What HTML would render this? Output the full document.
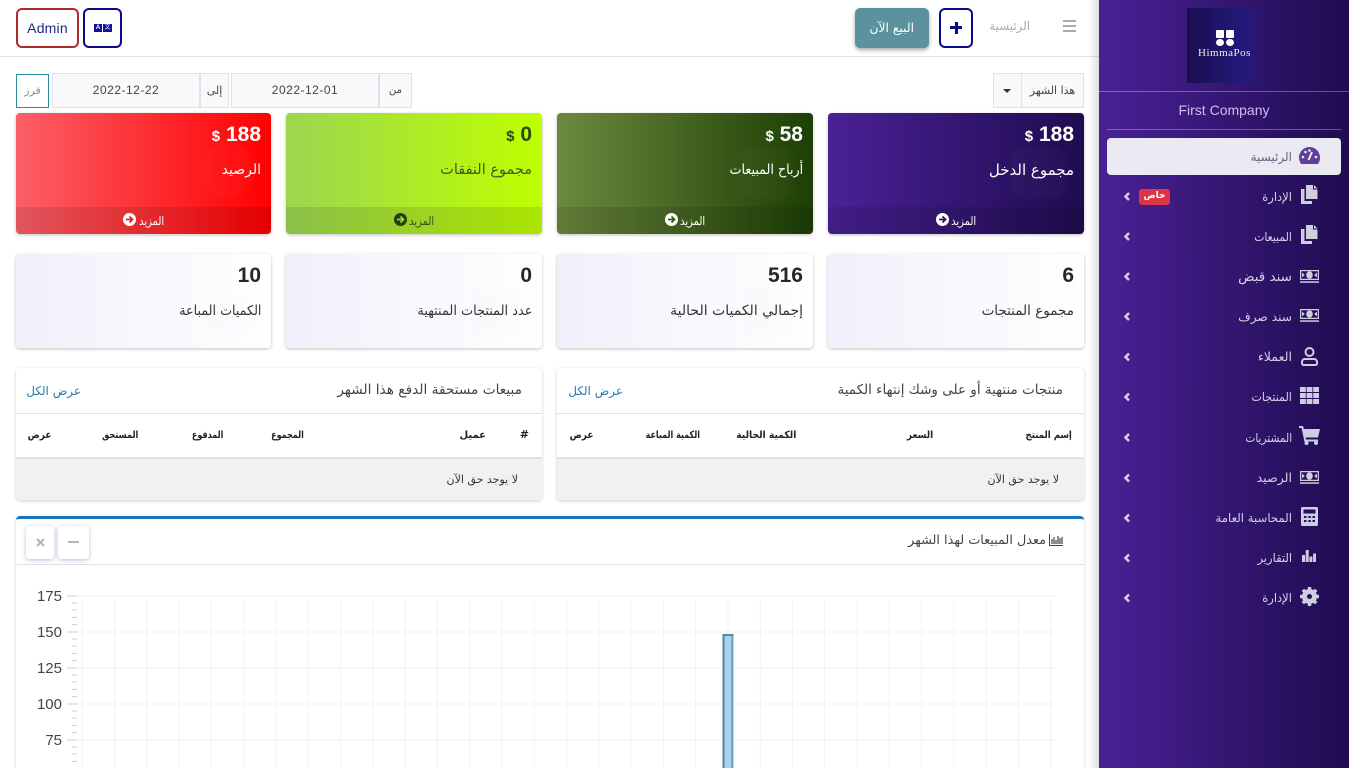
<!DOCTYPE html>
<html lang="ar"><head><meta charset="utf-8"><title>HimmaPos</title>
<style>
*{box-sizing:border-box}
html{margin:0;padding:0;width:1349px;height:768px;overflow:hidden}
body{margin:0;padding:0;width:1349px;height:768px;overflow:hidden;position:relative;background:#fff;font-family:"Liberation Sans","DejaVu Sans",sans-serif;color:#333}
.a{position:absolute}
.t{position:absolute;white-space:nowrap;line-height:20px;height:20px;font-family:"DejaVu Sans","Liberation Sans",sans-serif;transform-origin:right center}
.n{position:absolute;white-space:nowrap;line-height:24px;height:24px;font-family:"Liberation Sans",sans-serif;font-weight:bold;font-size:21px}
.n small{font-size:15px}
.card{position:absolute;border-radius:4px;box-shadow:0 1px 3px rgba(0,0,0,.25);overflow:hidden}
.foot{position:absolute;left:0;right:0;bottom:0;height:27px;background:rgba(0,0,0,.1)}
.blob{position:absolute;filter:blur(2px)}
.box{position:absolute;background:#fff;border-radius:4px;box-shadow:0 1px 3px rgba(0,0,0,.2);overflow:hidden}
.inp{position:absolute;background:#f8f9fa;border:1px solid #dfe2e6;height:35px;top:73px;line-height:33px;text-align:center;font-size:12px;color:#444;letter-spacing:.5px}
.th{font-size:10px;font-weight:bold;color:#222}
.more{font-size:12px;transform:scaleX(.83);top:211px}
.side{font-size:12px;color:#d5d0e6}
svg{position:absolute;overflow:visible}
</style></head>
<body>
<!-- main top bar -->
<div class="a" style="left:0;top:56px;width:1099px;height:1px;background:#dee2e6"></div>
<div class="a" style="left:16px;top:8px;width:63px;height:40px;border:2px solid #b02a2a;border-radius:6px;text-align:center;line-height:36px;font-size:14px;letter-spacing:.2px;color:#24248a">Admin</div>
<div class="a" style="left:83px;top:8px;width:39px;height:40px;border:2px solid #0a0a8c;border-radius:6px"></div>
<div class="a" style="left:94px;top:24px;width:8px;height:8px;background:#1010a0;color:#fff;font-size:6px;line-height:8px;text-align:center;font-weight:bold">A</div>
<div class="a" style="left:103px;top:24px;width:9px;height:8px;background:#1010a0;color:#fff;font-size:6px;line-height:8px;text-align:center">文</div>
<div class="a" style="left:855px;top:8px;width:74px;height:40px;background:#5b929e;border-radius:5px;box-shadow:0 2px 4px rgba(0,0,0,.35)"></div>
<span class="t" dir="rtl" style="right:435px;top:18px;color:#fff;font-size:12.300px">البيع الآن</span>
<div class="a" style="left:939px;top:8px;width:34px;height:40px;border:2px solid #0a0a8c;border-radius:6px"></div>
<div class="a" style="left:950px;top:26px;width:12px;height:3px;background:#0a0a8c"></div>
<div class="a" style="left:954.500px;top:22px;width:3px;height:12px;background:#0a0a8c"></div>
<span class="t" dir="rtl" style="right:319px;top:16px;color:#aaa;font-size:11.800px">الرئيسية</span>
<div class="a" style="left:1063px;top:20px;width:13px;height:2px;background:#a9a9b4"></div>
<div class="a" style="left:1063px;top:25px;width:13px;height:2px;background:#a9a9b4"></div>
<div class="a" style="left:1063px;top:30px;width:13px;height:2px;background:#a9a9b4"></div>

<!-- filter row -->
<div class="a" style="left:16px;top:74px;width:33px;height:34px;border:1px solid #2a8f9e;text-align:center;line-height:32px;font-size:11px;color:#6a9aa5;font-family:'DejaVu Sans',sans-serif">فرز</div>
<div class="inp" style="left:52px;width:148px">2022-12-22</div>
<div class="inp" style="left:200px;width:29px;font-family:'DejaVu Sans',sans-serif;font-size:11px">إلى</div>
<div class="inp" style="left:231px;width:148px">2022-12-01</div>
<div class="inp" style="left:379px;width:33px;font-family:'DejaVu Sans',sans-serif;font-size:10px">من</div>
<div class="inp" style="left:993px;width:29px"></div>
<div class="a" style="left:1003px;top:89px;border-left:4px solid transparent;border-right:4px solid transparent;border-top:4px solid #333"></div>
<div class="inp" style="left:1021px;width:63px;font-family:'DejaVu Sans',sans-serif;font-size:11px;letter-spacing:0">هذا الشهر</div>

<!-- colored cards -->
<div class="card" style="left:828px;top:113px;width:256px;height:121px;background:linear-gradient(90deg,#4a2196,#1f0c50)">
  <div class="blob" style="left:182px;top:34px;width:56px;height:52px;border-radius:12px;background:rgba(255,255,255,.02)"></div>
  <div class="foot"></div>
</div>
<div class="card" style="left:557px;top:113px;width:256px;height:121px;background:linear-gradient(90deg,#6c8a3e,#1e3f05)">
  <div class="blob" style="left:185px;top:34px;width:50px;height:52px;border-radius:8px;background:rgba(255,255,255,.02)"></div>
  <div class="foot"></div>
</div>
<div class="card" style="left:286px;top:113px;width:256px;height:121px;background:linear-gradient(90deg,#9bd651,#bfff00)">
  <div class="foot"></div>
</div>
<div class="card" style="left:16px;top:113px;width:255px;height:121px;background:linear-gradient(90deg,#fb6069,#ff0000)">
  <div class="blob" style="left:183px;top:29px;width:56px;height:56px;border-radius:50%;background:rgba(255,255,255,.025)"></div>
  <div class="foot"></div>
</div>

<span class="n" style="right:275px;top:123px;color:#fff"><small>$</small> 188</span>
<span class="n" style="right:546px;top:123px;color:#fff"><small>$</small> 58</span>
<span class="n" style="right:817px;top:123px;color:#2b4a10"><small>$</small> 0</span>
<span class="n" style="right:1088px;top:123px;color:#fff"><small>$</small> 188</span>
<span class="t" dir="rtl" style="right:275px;top:160px;color:#fff;font-size:15px">مجموع الدخل</span>
<span class="t" dir="rtl" style="right:546px;top:160px;color:#fff;font-size:14px;transform:scaleX(.907)">أرباح المبيعات</span>
<span class="t" dir="rtl" style="right:817px;top:160px;color:#3d5a20;font-size:14.500px">مجموع النفقات</span>
<span class="t" dir="rtl" style="right:1088px;top:160px;color:#fff;font-size:14px">الرصيد</span>

<!-- card footers -->
<span class="t more" dir="rtl" style="right:373px;color:#fff">المزيد</span>
<div class="a" style="left:936px;top:213px;width:13px;height:13px;border-radius:50%;background:#fff"></div>
<svg style="left:936px;top:213px" width="13" height="13" viewBox="0 0 13 13"><path d="M3 6.500h6.500M6.500 3.500l3 3-3 3" fill="none" stroke="#2b1463" stroke-width="1.800"/></svg>
<span class="t more" dir="rtl" style="right:644px;color:#fff">المزيد</span>
<div class="a" style="left:665px;top:213px;width:13px;height:13px;border-radius:50%;background:#fff"></div>
<svg style="left:665px;top:213px" width="13" height="13" viewBox="0 0 13 13"><path d="M3 6.500h6.500M6.500 3.500l3 3-3 3" fill="none" stroke="#3a5a1c" stroke-width="1.800"/></svg>
<span class="t more" dir="rtl" style="right:915px;color:#33501a">المزيد</span>
<div class="a" style="left:394px;top:213px;width:13px;height:13px;border-radius:50%;background:#23400f"></div>
<svg style="left:394px;top:213px" width="13" height="13" viewBox="0 0 13 13"><path d="M3 6.500h6.500M6.500 3.500l3 3-3 3" fill="none" stroke="#a9d52a" stroke-width="1.800"/></svg>
<span class="t more" dir="rtl" style="right:1185px;color:#fff">المزيد</span>
<div class="a" style="left:123px;top:213px;width:13px;height:13px;border-radius:50%;background:#fff"></div>
<svg style="left:123px;top:213px" width="13" height="13" viewBox="0 0 13 13"><path d="M3 6.500h6.500M6.500 3.500l3 3-3 3" fill="none" stroke="#d8282e" stroke-width="1.800"/></svg>

<!-- light cards -->
<div class="card" style="left:828px;top:254px;width:256px;height:94px;background:linear-gradient(90deg,#f0f0fb,#fff)"></div>
<div class="card" style="left:557px;top:254px;width:256px;height:94px;background:linear-gradient(90deg,#f0f0fb,#fff)"><div class="blob" style="left:185px;top:32px;width:48px;height:50px;background:rgba(120,120,170,.012)"></div></div>
<div class="card" style="left:286px;top:254px;width:256px;height:94px;background:linear-gradient(90deg,#f0f0fb,#fff)"><div class="blob" style="left:186px;top:36px;width:48px;height:44px;background:rgba(120,120,170,.012)"></div></div>
<div class="card" style="left:16px;top:254px;width:255px;height:94px;background:linear-gradient(90deg,#f0f0fb,#fff)"><div class="blob" style="left:190px;top:42px;width:50px;height:44px;border-radius:50%;background:rgba(120,120,170,.012)"></div></div>
<span class="n" style="right:275px;top:264px;color:#23272b">6</span>
<span class="n" style="right:546px;top:264px;color:#23272b">516</span>
<span class="n" style="right:817px;top:264px;color:#23272b">0</span>
<span class="n" style="right:1088px;top:264px;color:#23272b">10</span>
<span class="t" dir="rtl" style="right:275px;top:301px;color:#333;font-size:13.500px">مجموع المنتجات</span>
<span class="t" dir="rtl" style="right:546px;top:301px;color:#333;font-size:14px">إجمالي الكميات الحالية</span>
<span class="t" dir="rtl" style="right:817px;top:301px;color:#333;font-size:13.500px;transform:scaleX(.955)">عدد المنتجات المنتهية</span>
<span class="t" dir="rtl" style="right:1088px;top:301px;color:#333;font-size:13.500px;transform:scaleX(.94)">الكميات المباعة</span>

<!-- tables -->
<div class="box" style="left:16px;top:368px;width:526px;height:132px">
  <div class="a" style="left:0;right:0;top:45px;height:1px;background:#dee2e6"></div>
  <div class="a" style="left:0;right:0;top:89px;bottom:0;background:#f1f1f1;border-top:2px solid #dee2e6"></div>
</div>
<div class="box" style="left:557px;top:368px;width:527px;height:132px">
  <div class="a" style="left:0;right:0;top:45px;height:1px;background:#dee2e6"></div>
  <div class="a" style="left:0;right:0;top:89px;bottom:0;background:#f1f1f1;border-top:2px solid #dee2e6"></div>
</div>
<span class="t" dir="rtl" style="right:827px;top:380px;font-size:13.700px;color:#444">مبيعات مستحقة الدفع هذا الشهر</span>
<span class="t" dir="rtl" style="right:1268px;top:381px;font-size:12px;color:#2a7ab0">عرض الكل</span>
<span class="t" dir="rtl" style="right:286px;top:380px;font-size:13.500px;color:#444">منتجات منتهية أو على وشك إنتهاء الكمية</span>
<span class="t" dir="rtl" style="right:726px;top:381px;font-size:12px;color:#2a7ab0">عرض الكل</span>

<span class="t th" style="right:820px;top:425px;font-size:11px">#</span>
<span class="t th" dir="rtl" style="right:863px;top:426px">عميل</span>
<span class="t th" dir="rtl" style="right:1045px;top:426px;transform:scaleX(.8)">المجموع</span>
<span class="t th" dir="rtl" style="right:1126px;top:426px;transform:scaleX(.8)">المدفوع</span>
<span class="t th" dir="rtl" style="right:1211px;top:426px;transform:scaleX(.82)">المستحق</span>
<span class="t th" dir="rtl" style="right:1297px;top:426px;transform:scaleX(.9)">عرض</span>
<span class="t th" dir="rtl" style="right:277px;top:426px;transform:scaleX(.86)">إسم المنتج</span>
<span class="t th" dir="rtl" style="right:416px;top:426px;transform:scaleX(.9)">السعر</span>
<span class="t th" dir="rtl" style="right:553px;top:426px;transform:scaleX(.92)">الكمية الحالية</span>
<span class="t th" dir="rtl" style="right:649px;top:426px;transform:scaleX(.8)">الكمية المباعة</span>
<span class="t th" dir="rtl" style="right:755px;top:426px;transform:scaleX(.9)">عرض</span>
<span class="t" dir="rtl" style="right:831px;top:470px;font-size:11px;color:#333">لا يوجد حق الآن</span>
<span class="t" dir="rtl" style="right:290px;top:470px;font-size:11px;color:#333">لا يوجد حق الآن</span>

<!-- chart card -->
<div class="box" style="left:16px;top:516px;width:1068px;height:262px;border-top:3px solid #1a75bc">
  <div class="a" style="left:0;right:0;top:45px;height:1px;background:#dee2e6"></div>
</div>
<div class="a" style="left:26px;top:526px;width:28px;height:33px;background:#fff;border-radius:4px;box-shadow:0 1px 4px rgba(60,60,140,.35)"></div>
<div class="a" style="left:58px;top:526px;width:31px;height:33px;background:#fff;border-radius:4px;box-shadow:0 1px 4px rgba(60,60,140,.35)"></div>
<svg style="left:36px;top:538px" width="9" height="9" viewBox="0 0 9 9"><path d="M1 1l7 7M8 1l-7 7" stroke="#b5b5b5" stroke-width="2"/></svg>
<div class="a" style="left:68px;top:541px;width:11px;height:2px;background:#b5b5b5"></div>
<span class="t" dir="rtl" style="right:303px;top:531px;font-size:12.800px;color:#444">معدل المبيعات لهذا الشهر</span>
<svg style="left:1049px;top:534px" width="14" height="12" viewBox="0 0 14 12"><path d="M.5 0v11.500H14" fill="none" stroke="#444" stroke-width="1"/><path d="M3 5v5M5 3v7M7 6v4M9 2v8M11 4v6M13 3v7" stroke="#444" stroke-width="1.200"/></svg>

<svg style="left:0;top:0" width="1099" height="768" viewBox="0 0 1099 768">
  <path d="M77 596H1055M77 632H1055M77 668H1055M77 704H1055M77 740H1055" stroke="#f0f0f0" stroke-width="1" fill="none"/>
  <path d="M82.300 599V768M114.600 599V768M146.900 599V768M179.100 599V768M211.400 599V768M243.700 599V768M276 599V768M308.300 599V768M340.500 599V768M372.800 599V768M405.100 599V768M437.400 599V768M469.700 599V768M501.900 599V768M534.200 599V768M566.500 599V768M598.800 599V768M631.100 599V768M663.300 599V768M695.600 599V768M727.900 599V768M760.200 599V768M792.500 599V768M824.700 599V768M857 599V768M889.300 599V768M921.600 599V768M953.900 599V768M986.100 599V768M1018.400 599V768M1050.700 599V768" stroke="#f2f2f2" stroke-width="1" fill="none"/>
  <path d="M67 596H77M67 632H77M67 668H77M67 704H77M67 740H77" stroke="#cccccc" stroke-width="1"/>
  <path d="M72 603H77M72 610H77M72 617.500H77M72 624.500H77M72 639H77M72 646H77M72 653.500H77M72 660.500H77M72 675H77M72 682H77M72 689.500H77M72 696.500H77M72 711H77M72 718H77M72 725.500H77M72 732.500H77M72 747H77M72 754H77M72 761.500H77" stroke="#cfcfcf" stroke-width="1"/>
  <rect x="723" y="634" width="10" height="134" fill="#abd2ea"/>
  <path d="M723.500 768V635H732.500V768" fill="none" stroke="#4f86a6" stroke-width="2"/>
  <path d="M733 636V768" stroke="#79b9dc" stroke-width="1"/>
  <g font-family="Liberation Sans, sans-serif" font-size="15" fill="#444" text-anchor="end">
    <text x="62" y="601">175</text><text x="62" y="637">150</text><text x="62" y="673">125</text><text x="62" y="709">100</text><text x="62" y="745">75</text>
  </g>
</svg>

<!-- sidebar -->
<div class="a" style="left:1089px;top:0;width:10px;height:768px;background:linear-gradient(90deg,rgba(0,0,0,0),rgba(0,0,0,.13))"></div>
<div class="a" style="left:1099px;top:0;width:250px;height:768px;background:linear-gradient(90deg,#4a2196,#1f0c50)"></div>
<div class="a" style="left:1187px;top:8px;width:75px;height:75px;background:linear-gradient(90deg,#1b0e50,#23197a 75%,rgba(40,30,130,.2))"></div>
<div class="a" style="left:1216px;top:30px;width:8px;height:8px;background:#fff;border-radius:1px"></div>
<div class="a" style="left:1226px;top:30px;width:8px;height:8px;background:#fff;border-radius:1px"></div>
<div class="a" style="left:1216px;top:39px;width:8px;height:7px;background:#fff;border-radius:50%"></div>
<div class="a" style="left:1226px;top:39px;width:8px;height:7px;background:#fff;border-radius:50%"></div>
<div class="a" style="left:1187px;top:47px;width:75px;text-align:center;font-family:'Liberation Serif',serif;font-size:11px;color:#eee;letter-spacing:.5px;line-height:13px">HimmaPos</div>
<div class="a" style="left:1099px;top:91px;width:250px;height:1px;background:rgba(255,255,255,.3)"></div>
<div class="a" style="left:1099px;top:101px;width:250px;text-align:center;font-size:14px;line-height:18px;color:#cdbcf0">First Company</div>
<div class="a" style="left:1107px;top:129px;width:234px;height:1px;background:rgba(255,255,255,.3)"></div>
<div class="a" style="left:1107px;top:138px;width:234px;height:37px;background:#ebe9f2;border-radius:4px"></div>

<svg width="0" height="0" style="position:absolute"><defs>
  <symbol id="copy" viewBox="0 0 17 19"><path d="M5 0h7v4.500h4.500V14H5z" fill="#cfcde0"/><path d="M13 0l3.500 3.500H13z" fill="#cfcde0"/><path d="M0 4h3.500v12H11v3H0z" fill="#cfcde0"/></symbol>
  <symbol id="money" viewBox="0 0 19 13"><path fill-rule="evenodd" d="M0 0h19v10H0zM1.200 1.200v7.600h16.600V1.200z" fill="#cfcde0"/><rect x="0" y="11.300" width="19" height="1.500" fill="#cfcde0"/><ellipse cx="9.500" cy="5" rx="3.300" ry="3.800" fill="#cfcde0"/><path d="M2 2.500v5l2.800-2.500zM17 2.500v5l-2.800-2.500z" fill="#cfcde0"/></symbol>
</defs></svg>

<!-- active icon -->
<svg style="left:1299px;top:147px" width="21" height="17" viewBox="0 0 21 17"><path d="M10.500 0A10.500 10.500 0 0 0 0 10.500c0 2.400.8 4.600 2.100 6.500h16.800a10.400 10.400 0 0 0 2.100-6.500A10.500 10.500 0 0 0 10.500 0z" fill="#5f3f98"/><path d="M9.500 13L13 5" stroke="#ebe9f2" stroke-width="2"/><circle cx="4" cy="10" r="1.300" fill="#ebe9f2"/><circle cx="6.500" cy="5" r="1.300" fill="#ebe9f2"/><circle cx="10.500" cy="3.500" r="1.300" fill="#ebe9f2"/><circle cx="17" cy="10" r="1.300" fill="#ebe9f2"/></svg>
<span class="t" dir="rtl" style="right:57px;top:147px;font-size:12px;color:#6a6580">الرئيسية</span>

<!-- icons -->
<svg style="left:1301px;top:185px" width="17" height="19"><use href="#copy"/></svg>
<svg style="left:1301px;top:225px" width="17" height="19"><use href="#copy"/></svg>
<svg style="left:1300px;top:270px" width="19" height="13"><use href="#money"/></svg>
<svg style="left:1300px;top:309px" width="19" height="13"><use href="#money"/></svg>
<svg style="left:1301px;top:347px" width="17" height="19" viewBox="0 0 17 19"><circle cx="8.500" cy="5" r="4" fill="none" stroke="#cfcde0" stroke-width="2"/><path d="M4 12h9a3 3 0 0 1 3 3v1.500a1.500 1.500 0 0 1-1.500 1.500h-12A1.500 1.500 0 0 1 1 16.500V15a3 3 0 0 1 3-3z" fill="none" stroke="#cfcde0" stroke-width="2"/></svg>
<svg style="left:1300px;top:387px" width="19" height="17" viewBox="0 0 19 17"><path d="M0 0h5.800v5H0zM6.600 0h5.800v5H6.600zM13.200 0H19v5h-5.800zM0 6h5.800v5H0zM6.600 6h5.800v5H6.600zM13.200 6H19v5h-5.800zM0 12h5.800v5H0zM6.600 12h5.800v5H6.600zM13.200 12H19v5h-5.800z" fill="#cfcde0"/></svg>
<svg style="left:1299px;top:426px" width="21" height="19" viewBox="0 0 21 19"><path d="M0 0h4l.8 3H21l-2 8.500H6.600l.4 2H19v2H5.400L2.600 2H0z" fill="#cfcde0"/><circle cx="7.500" cy="17" r="2" fill="#cfcde0"/><circle cx="17" cy="17" r="2" fill="#cfcde0"/></svg>
<svg style="left:1300px;top:471px" width="19" height="13"><use href="#money"/></svg>
<svg style="left:1301px;top:507px" width="17" height="19" viewBox="0 0 17 19"><path fill-rule="evenodd" d="M1.500 0h14A1.500 1.500 0 0 1 17 1.500v16a1.500 1.500 0 0 1-1.500 1.500h-14A1.500 1.500 0 0 1 0 17.500v-16A1.500 1.500 0 0 1 1.500 0zM2.500 2.500v4h12v-4zM3 9v2h2.500V9zM7.300 9v2h2.500V9zM11.500 9v2H14V9zM3 13v2h2.500v-2zM7.300 13v2h2.500v-2zM11.500 13v2H14v-2z" fill="#cfcde0"/></svg>
<svg style="left:1302px;top:550px" width="14" height="12" viewBox="0 0 14 12"><path d="M0 5h3v7H0zM3.700 0h3v12h-3zM7.400 6.500h3V12h-3zM11.100 3.500H14V12h-2.900z" fill="#cfcde0"/></svg>
<svg style="left:1300px;top:587px" width="19" height="19" viewBox="0 0 19 19"><circle cx="9.500" cy="9.500" r="5" fill="none" stroke="#cfcde0" stroke-width="5"/><path d="M9.500 0v4M9.500 15v4M0 9.500h4M15 9.500h4M2.800 2.800l2.800 2.800M13.400 13.400l2.800 2.800M2.800 16.200l2.800-2.800M13.400 5.600l2.800-2.800" stroke="#cfcde0" stroke-width="3.500"/></svg>

<!-- labels -->
<span class="t side" dir="rtl" style="right:57px;top:187px;transform:scaleX(.96)">الإدارة</span>
<span class="t side" dir="rtl" style="right:57px;top:227px;transform:scaleX(.9)">المبيعات</span>
<span class="t side" dir="rtl" style="right:57px;top:267px;font-size:13.500px">سند قبض</span>
<span class="t side" dir="rtl" style="right:57px;top:307px;font-size:12.200px">سند صرف</span>
<span class="t side" dir="rtl" style="right:57px;top:347px;font-size:12.600px">العملاء</span>
<span class="t side" dir="rtl" style="right:57px;top:387px;transform:scaleX(.92)">المنتجات</span>
<span class="t side" dir="rtl" style="right:57px;top:428px;transform:scaleX(.88)">المشتريات</span>
<span class="t side" dir="rtl" style="right:57px;top:468px;font-size:12.600px">الرصيد</span>
<span class="t side" dir="rtl" style="right:57px;top:508px;font-size:11.700px">المحاسبة العامة</span>
<span class="t side" dir="rtl" style="right:57px;top:548px;transform:scaleX(.96)">التقارير</span>
<span class="t side" dir="rtl" style="right:57px;top:588px;transform:scaleX(.96)">الإدارة</span>

<!-- badge -->
<div class="a" style="left:1139px;top:189px;width:31px;height:16px;background:#dc3545;border-radius:3px;text-align:center;line-height:15px;color:#fff;font-size:9px;font-weight:bold;font-family:'DejaVu Sans',sans-serif">خاص</div>

<!-- chevrons -->
<svg style="left:0;top:0" width="1349" height="768" viewBox="0 0 1349 768"><path d="M1129 193l-3.500 3.500 3.500 3.500M1129 233l-3.500 3.500 3.500 3.500M1129 273l-3.500 3.500 3.500 3.500M1129 313l-3.500 3.500 3.500 3.500M1129 353.500l-3.500 3.500 3.500 3.500M1129 393.500l-3.500 3.500 3.500 3.500M1129 434l-3.500 3.500 3.500 3.500M1129 474.500l-3.500 3.500 3.500 3.500M1129 514.500l-3.500 3.500 3.500 3.500M1129 554.500l-3.500 3.500 3.500 3.500M1129 594.500l-3.500 3.500 3.500 3.500" fill="none" stroke="#d5d0e6" stroke-width="2.500"/></svg>
</body></html>
